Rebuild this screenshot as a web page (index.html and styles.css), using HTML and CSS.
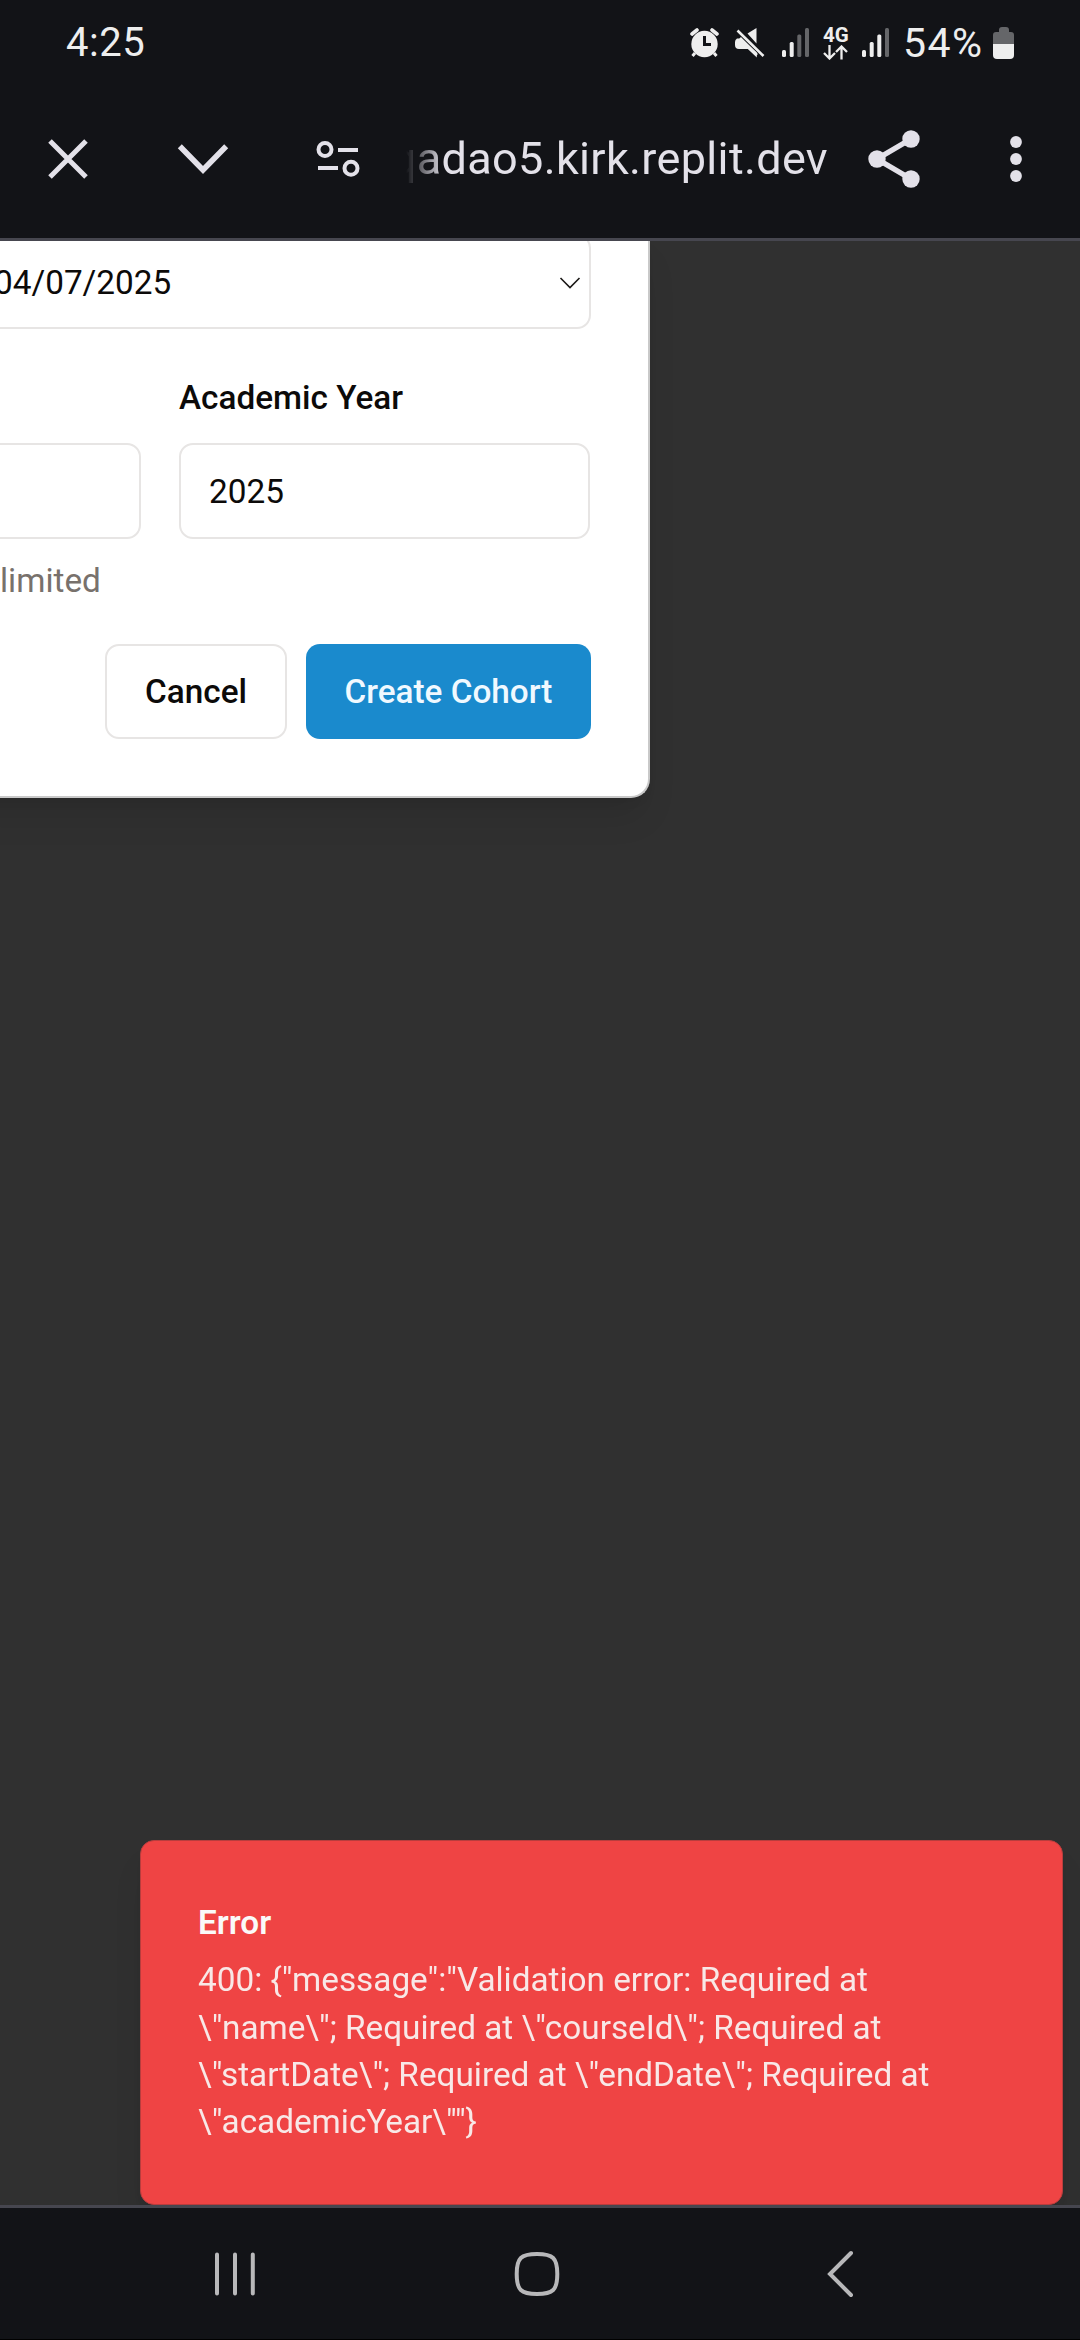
FILE: index.html
```html
<!DOCTYPE html>
<html lang="en">
<head>
<meta charset="utf-8">
<title>Create Cohort</title>
<link rel="stylesheet" href="styles.css">
</head>
<body>
<div class="screen">
  <header class="status">
    <span class="clock">4:25</span>
    <div class="status-icons">
      <svg class="alarm" width="30" height="32" viewBox="690 27 30 32"><circle cx="704.5" cy="44" r="13.2" fill="#eee"/><path d="M692 34l5-4M717 34l-5-4" stroke="#eee" stroke-width="3.6" stroke-linecap="round"/><path d="M695 53l-2.500 3M714 53l2.500 3" stroke="#eee" stroke-width="3"/><path d="M704.500 36v8.500h6.500" fill="none" stroke="#121317" stroke-width="3"/></svg>
      <svg class="mute" width="30" height="32" viewBox="735 27 30 32"><path d="M747.500 33.500l9-5.500v15.500zM737 38.500h4.500l15.300 14V57.500l-9-8.500H739q-4 0-4-4v-3q0-2.500 2-3.500z" fill="#eee"/><path d="M740 38l17 17M737.500 30.500l26 25.500" stroke="#eee" stroke-width="2.600"/></svg>
      <svg class="signal-a" width="28" height="32" viewBox="782 27 28 32" fill="#eee"><rect x="782" y="50" width="4" height="7" rx="1.500"/><rect x="789.700" y="42" width="4" height="15" rx="1.500"/><rect x="797.300" y="34.500" width="4" height="22.500" rx="1.500" fill="#656669"/><rect x="805" y="28" width="4" height="29" rx="1.500" fill="#656669"/></svg>
      <div class="network"><span>4G</span><svg width="26" height="15" viewBox="823 45 26 15" fill="none" stroke="#eee" stroke-width="2.300"><path d="M829.500 45v13M824 53l5.500 5.500L835 53M841.500 59.500V47M836 52l5.500-5.500L847 52"/></svg></div>
      <svg class="signal-b" width="28" height="32" viewBox="862 27 28 32" fill="#eee"><rect x="862" y="50" width="4" height="7" rx="1.500"/><rect x="869.700" y="42" width="4" height="15" rx="1.500"/><rect x="877.300" y="34.500" width="4" height="22.500" rx="1.500"/><rect x="885" y="28" width="4" height="29" rx="1.500" fill="#656669"/></svg>
      <span class="percent">54%</span>
      <svg class="battery" width="22" height="32" viewBox="993 27 22 32"><path d="M993 44v-9q0-3 3-3h3v-2q0-3 3-3h4q3 0 3 3v2h2q3 0 3 3v9z" fill="#656669"/><path d="M993 44h21v11q0 4-4 4h-13q-4 0-4-4z" fill="#eee"/></svg>
    </div>
  </header>
  <nav class="toolbar">
    <svg class="close" width="40" height="40" viewBox="48 139 40 40" fill="none" stroke="#e3e1e9" stroke-width="5"><path d="M50 141l36 36M86 141l-36 36"/></svg>
    <svg class="down" width="52" height="32" viewBox="177 143 52 32" fill="none" stroke="#e3e1e9" stroke-width="5.600"><path d="M179.800 146.300l23.200 23.700 23.200-23.700"/></svg>
    <svg class="tune" width="44" height="38" viewBox="316 140 44 38" fill="none" stroke="#e3e1e9" stroke-width="4"><circle cx="325" cy="149.500" r="6.500"/><path d="M338 150h20M318 168h20"/><circle cx="351" cy="168.300" r="6.500"/></svg>
    <div class="url"><span>qadao5.kirk.replit.dev</span></div>
    <svg class="share" width="54" height="60" viewBox="867 129 54 60" fill="#e3e1e9"><path d="M911 139l-34 20 34 20" fill="none" stroke="#e3e1e9" stroke-width="5.500"/><circle cx="911" cy="139" r="8.700"/><circle cx="877" cy="159" r="8.700"/><circle cx="911" cy="179" r="8.700"/></svg>
    <svg class="more" width="12" height="46" viewBox="1010 136 12 46" fill="#e3e1e9"><circle cx="1016" cy="142" r="5.900"/><circle cx="1016" cy="159" r="5.900"/><circle cx="1016" cy="176" r="5.900"/></svg>
  </nav>
  <main class="page">
    <section class="dialog">
      <div class="select"><span>04/07/2025</span><svg width="22" height="14" viewBox="0 0 22 14" fill="none" stroke="#1c1917" stroke-width="1.600"><path d="M1.500 2L11 11.500 20.500 2"/></svg></div>
      <div class="fields">
        <div class="field"><span class="label"></span><div class="input"></div><span class="hint">limited</span></div>
        <div class="field"><span class="label">Academic Year</span><div class="input">2025</div></div>
      </div>
      <div class="actions"><button class="button cancel">Cancel</button><button class="button create">Create Cohort</button></div>
    </section>
    <aside class="toast">
      <div class="toast-title">Error</div>
      <div class="toast-text">400: {"message":"Validation error: Required at<br>\"name\"; Required at \"courseId\"; Required at<br>\"startDate\"; Required at \"endDate\"; Required at<br>\"academicYear\""}</div>
    </aside>
  </main>
  <footer class="navbar">
    <svg width="40" height="46" viewBox="215 2251 40 46" stroke="#b8b8ba" stroke-width="4" stroke-linecap="round"><path d="M217 2254.500v39M235 2254.500v39M252.800 2254.500v39"/></svg>
    <svg class="home" width="46" height="46" viewBox="514 2251 46 46" fill="none" stroke="#b8b8ba" stroke-width="4"><path d="M537 2254c16 0 20.300 4 20.300 20s-4.300 20-20.300 20-20.300-4-20.300-20 4.300-20 20.300-20z"/></svg>
    <svg class="back" width="28" height="48" viewBox="827 2250 28 48" fill="none" stroke="#b8b8ba" stroke-width="4" stroke-linecap="round"><path d="M851 2253l-21 21 21 21"/></svg>
  </footer>
</div>
</body>
</html>
```
FILE: styles.css
```css
* { box-sizing: border-box; }
body { margin: 0; background: #121317; font-family: Roboto, sans-serif; }
svg { display: block; flex: none; }
.screen { width: 1080px; height: 2340px; overflow: hidden; display: flex; flex-direction: column; }
.status { height: 86px; flex: none; display: flex; align-items: center; justify-content: space-between; padding: 0 65px 0 66px; color: #eee; font-size: 40px; line-height: 48px; }
.clock { letter-spacing: .5px; }
.status-icons { display: flex; align-items: center; }
.mute { margin-left: 15px; }
.signal-a { margin-left: 17px; }
.network { margin-left: 13px; width: 26px; height: 33px; display: flex; flex-direction: column; justify-content: space-between; font-size: 20.500px; line-height: 16px; font-weight: 700; }
.signal-b { margin-left: 13px; }
.percent { margin-left: 13px; width: 82px; margin-right: 8px; font-size: 41px; letter-spacing: 1.500px; white-space: nowrap; }
.toolbar { height: 152px; flex: none; display: flex; align-items: center; padding: 0 58px 6px 48px; }
.down { margin-left: 89px; }
.tune { margin-left: 87px; }
.url { margin-left: 44px; width: 424px; overflow: hidden; display: flex; justify-content: flex-end; color: #e3e1e9; font-size: 45px; letter-spacing: .35px; line-height: 60px; white-space: nowrap; -webkit-mask-image: linear-gradient(90deg, transparent 2px, #000 40px); mask-image: linear-gradient(90deg, transparent 2px, #000 40px); }
.share { margin-left: 39px; }
.more { margin-left: 89px; }
.page { position: relative; height: 1970px; flex: none; overflow: hidden; background: #303030; border-top: 3px solid #46464f; border-bottom: 3px solid #46464f; }
.dialog { width: 690px; margin: -7px 0 0 -40px; padding: 0 57px 57px 0; display: flex; flex-direction: column; background: #fff; border: solid #c9c9c9; border-width: 0 2px 2px 0; border-radius: 0 0 19px 0; box-shadow: 0 24px 35px -7px rgba(0,0,0,.1), 0 9px 14px -9px rgba(0,0,0,.1); color: #0c0a09; font-size: 33.300px; line-height: 47px; }
.select, .input { height: 95px; display: flex; align-items: center; border: 2px solid #e7e5e4; border-radius: 14px; }
.select { justify-content: space-between; padding: 2px 8px 0 34px; border-left: 0; }
.fields { display: grid; grid-template-columns: 181px 411px; gap: 38px; padding-top: 45px; }
.field { display: flex; flex-direction: column; }
.label { height: 47px; margin-bottom: 22px; font-weight: 500; }
.input { height: 96px; padding: 0 28px; }
.hint { align-self: flex-start; margin: 18px 0 0 40px; color: #78716c; }
.actions { display: flex; justify-content: flex-end; gap: 19px; margin-top: 40px; }
.button { height: 95px; padding: 0; font: 500 33.300px/47px Roboto, sans-serif; border-radius: 14px; }
.cancel { width: 182px; background: #fff; color: #0c0a09; border: 2px solid #e7e5e4; }
.create { width: 285px; background: #1a8acd; color: #f0f9ff; border: 0; }
.toast { position: absolute; right: 17px; bottom: 0; width: 923px; height: 365px; padding: 58px 57px; background: #ef4444; border: 1px solid #b93d3d; border-radius: 14px; box-shadow: 0 24px 35px -7px rgba(0,0,0,.1), 0 9px 14px -9px rgba(0,0,0,.1); color: #fafaf9; font-size: 33.300px; line-height: 47.300px; white-space: nowrap; }
.toast-title { font-weight: 600; margin-bottom: 10px; }
.toast-text { opacity: .9; }
.navbar { height: 132px; flex: none; display: flex; align-items: center; padding-left: 215px; border-bottom: 1px solid #000; }
.home { margin-left: 259px; }
.back { margin-left: 267px; }
```
